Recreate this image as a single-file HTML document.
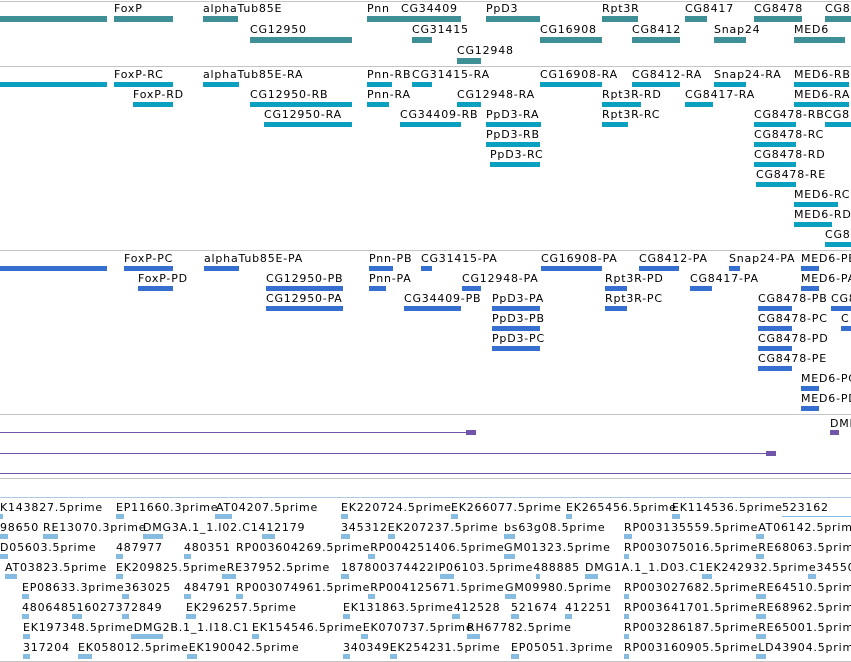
<!DOCTYPE html>
<html><head><meta charset="utf-8"><style>
body{margin:0;width:851px;height:662px;overflow:hidden;background:#fff;position:relative;font-family:"DejaVu Sans","Liberation Sans",sans-serif}
.t{position:absolute;font-size:11px;line-height:13px;white-space:nowrap;color:#000;letter-spacing:0.8px;margin-top:1px}
.b{position:absolute;height:5px}
.g{background:#3f9096;height:6px}
.c{background:#0ca0c0}
.p{background:#3570d0}
.e{background:#86bce2;height:5px}
.h{position:absolute;left:0;width:851px;height:1px}
</style></head><body>
<div class="h" style="top:1px;background:#c4c4c4"></div>
<div class="h" style="top:66px;background:#c4c4c4"></div>
<div class="h" style="top:250px;background:#c4c4c4"></div>
<div class="h" style="top:414px;background:#c4c4c4"></div>
<div class="h" style="top:478px;background:#c4c4c4"></div>
<div class="h" style="top:497px;background:#a8cce4"></div>
<div class="h" style="top:661px;background:#c4c4c4"></div>

<!-- genes -->
<div class="b g" style="left:0;top:16px;width:107px"></div>
<div class="t" style="left:114px;top:1px">FoxP</div><div class="b g" style="left:114px;top:16px;width:59px"></div>
<div class="t" style="left:203px;top:1px">alphaTub85E</div><div class="b g" style="left:203px;top:16px;width:35px"></div>
<div class="t" style="left:367px;top:1px">Pnn</div><div class="b g" style="left:367px;top:16px;width:33px"></div>
<div class="t" style="left:401px;top:1px">CG34409</div><div class="b g" style="left:400px;top:16px;width:61px"></div>
<div class="t" style="left:486px;top:1px">PpD3</div><div class="b g" style="left:486px;top:16px;width:54px"></div>
<div class="t" style="left:602px;top:1px">Rpt3R</div><div class="b g" style="left:602px;top:16px;width:36px"></div>
<div class="t" style="left:685px;top:1px">CG8417</div><div class="b g" style="left:685px;top:16px;width:22px"></div>
<div class="t" style="left:754px;top:1px">CG8478</div><div class="b g" style="left:754px;top:16px;width:48px"></div>
<div class="t" style="left:825px;top:1px">CG8</div><div class="b g" style="left:825px;top:16px;width:26px"></div>
<div class="t" style="left:250px;top:22px">CG12950</div><div class="b g" style="left:250px;top:37px;width:102px"></div>
<div class="t" style="left:412px;top:22px">CG31415</div><div class="b g" style="left:412px;top:37px;width:20px"></div>
<div class="t" style="left:540px;top:22px">CG16908</div><div class="b g" style="left:540px;top:37px;width:62px"></div>
<div class="t" style="left:632px;top:22px">CG8412</div><div class="b g" style="left:632px;top:37px;width:48px"></div>
<div class="t" style="left:714px;top:22px">Snap24</div><div class="b g" style="left:714px;top:37px;width:32px"></div>
<div class="t" style="left:794px;top:22px">MED6</div><div class="b g" style="left:794px;top:37px;width:51px"></div>
<div class="t" style="left:457px;top:43px">CG12948</div><div class="b g" style="left:457px;top:58px;width:24px"></div>

<!-- transcripts -->
<div class="b c" style="left:0;top:82px;width:107px"></div>
<div class="t" style="left:114px;top:67px">FoxP-RC</div><div class="b c" style="left:114px;top:82px;width:59px"></div>
<div class="t" style="left:203px;top:67px">alphaTub85E-RA</div><div class="b c" style="left:203px;top:82px;width:36px"></div>
<div class="t" style="left:367px;top:67px">Pnn-RB</div><div class="b c" style="left:367px;top:82px;width:25px"></div>
<div class="t" style="left:412px;top:67px">CG31415-RA</div><div class="b c" style="left:412px;top:82px;width:20px"></div>
<div class="t" style="left:540px;top:67px">CG16908-RA</div><div class="b c" style="left:540px;top:82px;width:62px"></div>
<div class="t" style="left:632px;top:67px">CG8412-RA</div><div class="b c" style="left:632px;top:82px;width:48px"></div>
<div class="t" style="left:714px;top:67px">Snap24-RA</div><div class="b c" style="left:714px;top:82px;width:32px"></div>
<div class="t" style="left:794px;top:67px">MED6-RB</div><div class="b c" style="left:794px;top:82px;width:55px"></div>
<div class="t" style="left:133px;top:87px">FoxP-RD</div><div class="b c" style="left:133px;top:102px;width:40px"></div>
<div class="t" style="left:250px;top:87px">CG12950-RB</div><div class="b c" style="left:250px;top:102px;width:102px"></div>
<div class="t" style="left:367px;top:87px">Pnn-RA</div><div class="b c" style="left:367px;top:102px;width:22px"></div>
<div class="t" style="left:457px;top:87px">CG12948-RA</div><div class="b c" style="left:457px;top:102px;width:24px"></div>
<div class="t" style="left:602px;top:87px">Rpt3R-RD</div><div class="b c" style="left:602px;top:102px;width:39px"></div>
<div class="t" style="left:685px;top:87px">CG8417-RA</div><div class="b c" style="left:685px;top:102px;width:28px"></div>
<div class="t" style="left:794px;top:87px">MED6-RA</div><div class="b c" style="left:794px;top:102px;width:55px"></div>
<div class="t" style="left:264px;top:107px">CG12950-RA</div><div class="b c" style="left:264px;top:122px;width:88px"></div>
<div class="t" style="left:400px;top:107px">CG34409-RB</div><div class="b c" style="left:400px;top:122px;width:61px"></div>
<div class="t" style="left:486px;top:107px">PpD3-RA</div><div class="b c" style="left:486px;top:122px;width:55px"></div>
<div class="t" style="left:602px;top:107px">Rpt3R-RC</div><div class="b c" style="left:602px;top:122px;width:26px"></div>
<div class="t" style="left:754px;top:107px">CG8478-RBCG8</div><div class="b c" style="left:754px;top:122px;width:42px"></div>
<div class="b c" style="left:825px;top:122px;width:26px"></div>
<div class="t" style="left:486px;top:127px">PpD3-RB</div><div class="b c" style="left:486px;top:142px;width:54px"></div>
<div class="t" style="left:754px;top:127px">CG8478-RC</div><div class="b c" style="left:754px;top:142px;width:42px"></div>
<div class="t" style="left:490px;top:147px">PpD3-RC</div><div class="b c" style="left:490px;top:162px;width:50px"></div>
<div class="t" style="left:754px;top:147px">CG8478-RD</div><div class="b c" style="left:754px;top:162px;width:42px"></div>
<div class="t" style="left:756px;top:167px">CG8478-RE</div><div class="b c" style="left:756px;top:182px;width:40px"></div>
<div class="t" style="left:794px;top:187px">MED6-RC</div><div class="b c" style="left:794px;top:202px;width:44px"></div>
<div class="t" style="left:794px;top:207px">MED6-RD</div><div class="b c" style="left:794px;top:222px;width:38px"></div>
<div class="t" style="left:825px;top:227px">CG8</div><div class="b c" style="left:825px;top:242px;width:26px"></div>

<!-- proteins -->
<div class="b p" style="left:0;top:266px;width:107px"></div>
<div class="t" style="left:124px;top:251px">FoxP-PC</div><div class="b p" style="left:124px;top:266px;width:49px"></div>
<div class="t" style="left:204px;top:251px">alphaTub85E-PA</div><div class="b p" style="left:204px;top:266px;width:35px"></div>
<div class="t" style="left:369px;top:251px">Pnn-PB</div><div class="b p" style="left:369px;top:266px;width:24px"></div>
<div class="t" style="left:421px;top:251px">CG31415-PA</div><div class="b p" style="left:421px;top:266px;width:11px"></div>
<div class="t" style="left:541px;top:251px">CG16908-PA</div><div class="b p" style="left:541px;top:266px;width:61px"></div>
<div class="t" style="left:639px;top:251px">CG8412-PA</div><div class="b p" style="left:639px;top:266px;width:40px"></div>
<div class="t" style="left:729px;top:251px">Snap24-PA</div><div class="b p" style="left:729px;top:266px;width:11px"></div>
<div class="t" style="left:801px;top:251px">MED6-PB</div><div class="b p" style="left:801px;top:266px;width:18px"></div>
<div class="t" style="left:138px;top:271px">FoxP-PD</div><div class="b p" style="left:138px;top:286px;width:35px"></div>
<div class="t" style="left:266px;top:271px">CG12950-PB</div><div class="b p" style="left:266px;top:286px;width:77px"></div>
<div class="t" style="left:369px;top:271px">Pnn-PA</div><div class="b p" style="left:369px;top:286px;width:17px"></div>
<div class="t" style="left:462px;top:271px">CG12948-PA</div><div class="b p" style="left:462px;top:286px;width:19px"></div>
<div class="t" style="left:605px;top:271px">Rpt3R-PD</div><div class="b p" style="left:605px;top:286px;width:22px"></div>
<div class="t" style="left:690px;top:271px">CG8417-PA</div><div class="b p" style="left:690px;top:286px;width:22px"></div>
<div class="t" style="left:801px;top:271px">MED6-PA</div><div class="b p" style="left:801px;top:286px;width:18px"></div>
<div class="t" style="left:266px;top:291px">CG12950-PA</div><div class="b p" style="left:266px;top:306px;width:77px"></div>
<div class="t" style="left:404px;top:291px">CG34409-PB</div><div class="b p" style="left:404px;top:306px;width:57px"></div>
<div class="t" style="left:492px;top:291px">PpD3-PA</div><div class="b p" style="left:492px;top:306px;width:48px"></div>
<div class="t" style="left:605px;top:291px">Rpt3R-PC</div><div class="b p" style="left:605px;top:306px;width:22px"></div>
<div class="t" style="left:758px;top:291px">CG8478-PB</div><div class="b p" style="left:758px;top:306px;width:34px"></div>
<div class="t" style="left:831px;top:291px">CG8</div><div class="b p" style="left:831px;top:306px;width:20px"></div>
<div class="t" style="left:492px;top:311px">PpD3-PB</div><div class="b p" style="left:492px;top:326px;width:48px"></div>
<div class="t" style="left:758px;top:311px">CG8478-PC</div><div class="b p" style="left:758px;top:326px;width:34px"></div>
<div class="t" style="left:841px;top:311px">C</div><div class="b p" style="left:841px;top:326px;width:10px"></div>
<div class="t" style="left:492px;top:331px">PpD3-PC</div><div class="b p" style="left:492px;top:346px;width:48px"></div>
<div class="t" style="left:758px;top:331px">CG8478-PD</div><div class="b p" style="left:758px;top:346px;width:34px"></div>
<div class="t" style="left:758px;top:351px">CG8478-PE</div><div class="b p" style="left:758px;top:366px;width:34px"></div>
<div class="t" style="left:801px;top:371px">MED6-PC</div><div class="b p" style="left:801px;top:386px;width:18px"></div>
<div class="t" style="left:801px;top:391px">MED6-PD</div><div class="b p" style="left:801px;top:406px;width:18px"></div>

<!-- purple -->
<div class="t" style="left:830px;top:416px">DMI</div>
<div class="b" style="left:830px;top:430px;width:9px;background:#7055a8"></div>
<div style="position:absolute;left:0;top:432px;width:468px;height:1px;background:#7055a8"></div>
<div class="b" style="left:466px;top:430px;width:10px;background:#7055a8"></div>
<div style="position:absolute;left:0;top:453px;width:768px;height:1px;background:#7055a8"></div>
<div class="b" style="left:766px;top:451px;width:10px;background:#7055a8"></div>
<div style="position:absolute;left:0;top:473px;width:851px;height:1px;background:#7055a8"></div>

<!-- ESTs -->
<div class="t" style="left:0;top:500px">K143827.5prime</div><div class="b e" style="left:0;top:514px;width:3px"></div>
<div class="t" style="left:116px;top:500px">EP11660.3prime</div><div class="b e" style="left:116px;top:514px;width:8px"></div>
<div class="t" style="left:216px;top:500px">AT04207.5prime</div><div class="b e" style="left:215px;top:514px;width:17px"></div>
<div class="t" style="left:341px;top:500px">EK220724.5prime</div><div class="b e" style="left:341px;top:514px;width:7px"></div>
<div class="t" style="left:451px;top:500px">EK266077.5prime</div><div class="b e" style="left:451px;top:514px;width:7px"></div>
<div class="t" style="left:566px;top:500px">EK265456.5prime</div><div class="b e" style="left:566px;top:514px;width:6px"></div>
<div class="t" style="left:672px;top:500px">EK114536.5prime</div><div class="b e" style="left:672px;top:514px;width:8px"></div>
<div class="t" style="left:782px;top:500px">523162</div><div class="b e" style="left:782px;top:516px;width:69px;height:1px"></div>

<div class="t" style="left:0;top:520px">98650</div><div class="b e" style="left:0;top:534px;width:8px"></div>
<div class="t" style="left:43px;top:520px">RE13070.3prime</div><div class="b e" style="left:43px;top:534px;width:15px"></div>
<div class="t" style="left:143px;top:520px">DMG3A.1_1.I02.C1412179</div><div class="b e" style="left:143px;top:534px;width:20px"></div><div class="b e" style="left:262px;top:534px;width:13px"></div>
<div class="t" style="left:341px;top:520px">345312EK207237.5prime</div><div class="b e" style="left:341px;top:534px;width:9px"></div><div class="b e" style="left:388px;top:534px;width:7px"></div>
<div class="t" style="left:504px;top:520px">bs63g08.5prime</div><div class="b e" style="left:504px;top:534px;width:11px"></div>
<div class="t" style="left:624px;top:520px">RP003135559.5primeAT06142.5prime</div><div class="b e" style="left:624px;top:534px;width:8px"></div><div class="b e" style="left:756px;top:534px;width:8px"></div>

<div class="t" style="left:0;top:540px">D05603.5prime</div><div class="b e" style="left:0;top:554px;width:8px"></div>
<div class="t" style="left:116px;top:540px">487977</div><div class="b e" style="left:116px;top:554px;width:7px"></div>
<div class="t" style="left:184px;top:540px">480351</div><div class="b e" style="left:184px;top:554px;width:7px"></div>
<div class="t" style="left:236px;top:540px">RP003604269.5primeRP004251406.5prime</div><div class="b e" style="left:368px;top:554px;width:7px"></div>
<div class="t" style="left:504px;top:540px">GM01323.5prime</div><div class="b e" style="left:504px;top:554px;width:11px"></div>
<div class="t" style="left:624px;top:540px">RP003075016.5primeRE68063.5prime</div><div class="b e" style="left:624px;top:554px;width:5px"></div><div class="b e" style="left:756px;top:554px;width:8px"></div>

<div class="t" style="left:5px;top:560px">AT03823.5prime</div><div class="b e" style="left:5px;top:574px;width:12px"></div>
<div class="t" style="left:116px;top:560px">EK209825.5primeRE37952.5prime</div><div class="b e" style="left:116px;top:574px;width:7px"></div><div class="b e" style="left:222px;top:574px;width:14px"></div>
<div class="t" style="left:341px;top:560px">187800374422IP06103.5prime488885</div><div class="b e" style="left:341px;top:574px;width:8px"></div><div class="b e" style="left:440px;top:574px;width:14px"></div><div class="b e" style="left:536px;top:574px;width:4px"></div>
<div class="t" style="left:585px;top:560px">DMG1A.1_1.D03.C1EK242932.5prime34550</div><div class="b e" style="left:585px;top:574px;width:13px"></div><div class="b e" style="left:702px;top:574px;width:10px"></div><div class="b e" style="left:808px;top:574px;width:8px"></div>

<div class="t" style="left:22px;top:580px">EP08633.3prime363025</div><div class="b e" style="left:22px;top:594px;width:7px"></div><div class="b e" style="left:122px;top:594px;width:7px"></div>
<div class="t" style="left:184px;top:580px">484791</div><div class="b e" style="left:184px;top:594px;width:7px"></div>
<div class="t" style="left:236px;top:580px">RP003074961.5primeRP004125671.5prime</div><div class="b e" style="left:236px;top:594px;width:7px"></div><div class="b e" style="left:368px;top:594px;width:7px"></div>
<div class="t" style="left:505px;top:580px">GM09980.5prime</div><div class="b e" style="left:505px;top:594px;width:11px"></div>
<div class="t" style="left:624px;top:580px">RP003027682.5primeRE64510.5prime</div><div class="b e" style="left:624px;top:594px;width:5px"></div><div class="b e" style="left:756px;top:594px;width:10px"></div>

<div class="t" style="left:22px;top:600px">480648516027372849</div><div class="b e" style="left:22px;top:614px;width:7px"></div><div class="b e" style="left:72px;top:614px;width:10px"></div><div class="b e" style="left:122px;top:614px;width:7px"></div>
<div class="t" style="left:186px;top:600px">EK296257.5prime</div><div class="b e" style="left:186px;top:614px;width:10px"></div>
<div class="t" style="left:343px;top:600px">EK131863.5prime412528</div><div class="b e" style="left:343px;top:614px;width:7px"></div><div class="b e" style="left:452px;top:614px;width:8px"></div>
<div class="t" style="left:511px;top:600px">521674</div><div class="b e" style="left:511px;top:614px;width:8px"></div>
<div class="t" style="left:565px;top:600px">412251</div><div class="b e" style="left:565px;top:614px;width:7px"></div>
<div class="t" style="left:624px;top:600px">RP003641701.5primeRE68962.5prime</div><div class="b e" style="left:624px;top:614px;width:5px"></div><div class="b e" style="left:756px;top:614px;width:10px"></div>

<div class="t" style="left:23px;top:620px">EK197348.5primeDMG2B.1_1.I18.C1</div><div class="b e" style="left:23px;top:634px;width:7px"></div><div class="b e" style="left:131px;top:634px;width:32px"></div>
<div class="t" style="left:252px;top:620px">EK154546.5primeEK070737.5prime</div><div class="b e" style="left:252px;top:634px;width:7px"></div><div class="b e" style="left:361px;top:634px;width:7px"></div>
<div class="t" style="left:467px;top:620px">RH67782.5prime</div><div class="b e" style="left:467px;top:634px;width:13px"></div>
<div class="t" style="left:624px;top:620px">RP003286187.5primeRE65001.5prime</div><div class="b e" style="left:624px;top:634px;width:5px"></div><div class="b e" style="left:756px;top:634px;width:10px"></div>

<div class="t" style="left:23px;top:640px">317204</div><div class="b e" style="left:23px;top:654px;width:7px"></div>
<div class="t" style="left:78px;top:640px">EK058012.5primeEK190042.5prime</div><div class="b e" style="left:78px;top:654px;width:14px"></div><div class="b e" style="left:187px;top:654px;width:10px"></div>
<div class="t" style="left:343px;top:640px">340349EK254231.5prime</div><div class="b e" style="left:343px;top:654px;width:7px"></div><div class="b e" style="left:390px;top:654px;width:7px"></div>
<div class="t" style="left:511px;top:640px">EP05051.3prime</div><div class="b e" style="left:511px;top:654px;width:8px"></div>
<div class="t" style="left:624px;top:640px">RP003160905.5primeLD43904.5prime</div><div class="b e" style="left:624px;top:654px;width:5px"></div><div class="b e" style="left:756px;top:654px;width:10px"></div>
</body></html>
